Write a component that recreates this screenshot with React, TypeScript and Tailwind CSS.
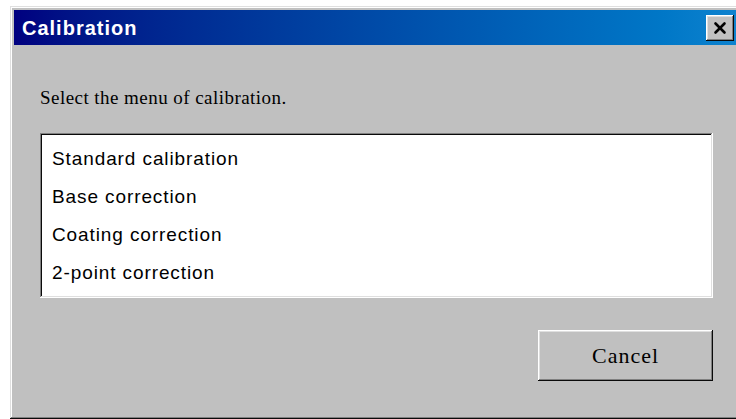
import { X } from "lucide-react";

const MENU_ITEMS = [
  "Standard calibration",
  "Base correction",
  "Coating correction",
  "2-point correction",
];

// classic 3D bevels
const raised =
  "shadow-[inset_-1px_-1px_#0a0a0a,inset_1px_1px_#ffffff,inset_-2px_-2px_#808080,inset_2px_2px_#dfdfdf]";
const windowFrame =
  "shadow-[inset_-1px_-1px_#0a0a0a,inset_1px_1px_#dfdfdf,inset_-2px_-2px_#808080,inset_2px_2px_#ffffff]";
const sunken =
  "shadow-[inset_-1px_-1px_#ffffff,inset_1px_1px_#808080,inset_-2px_-2px_#dfdfdf,inset_2px_2px_#0a0a0a]";

export default function App() {
  return (
    <div className="h-[419px] w-[736px] overflow-hidden bg-white pl-[10px] pt-[6px]">
      <div className={`flex h-[413px] w-[740px] flex-col bg-[#c0c0c0] p-[4px] ${windowFrame}`}>
        {/* title bar */}
        <div className="flex h-[35px] shrink-0 items-center justify-between bg-gradient-to-r from-[#000080] to-[#1084d0] pl-[8px] pr-[8px]">
          <span className="font-['Liberation_Sans',Arial,sans-serif] text-[20px] font-bold tracking-[1px] text-white">
            Calibration
          </span>
          <button
            type="button"
            className={`mr-[4px] flex h-[26px] w-[28px] items-center justify-center bg-[#c0c0c0] ${raised}`}
          >
            <X className="h-[18px] w-[18px] text-black" strokeWidth={3.5} />
          </button>
        </div>

        {/* body */}
        <div className="flex flex-1 flex-col pl-[26px] pr-[23px]">
          <p className="mt-[42px] font-['Liberation_Serif','Times_New_Roman',serif] text-[19px] leading-[22px] tracking-[0.45px] text-black">
            Select the menu of calibration.
          </p>

          <ul className={`mt-[24px] h-[165px] w-[673px] bg-white pl-[12px] pt-[7px] ${sunken}`}>
            {MENU_ITEMS.map((item) => (
              <li
                key={item}
                className="h-[38px] font-['Liberation_Sans',Arial,sans-serif] text-[19px] leading-[38px] tracking-[0.9px] text-black"
              >
                {item}
              </li>
            ))}
          </ul>

          <div className="mt-[32px] flex w-[673px] justify-end">
            <button
              type="button"
              className={`h-[51px] w-[175px] bg-[#c0c0c0] font-['Liberation_Serif','Times_New_Roman',serif] text-[22px] tracking-[1px] text-black ${raised}`}
            >
              Cancel
            </button>
          </div>
        </div>
      </div>
    </div>
  );
}
